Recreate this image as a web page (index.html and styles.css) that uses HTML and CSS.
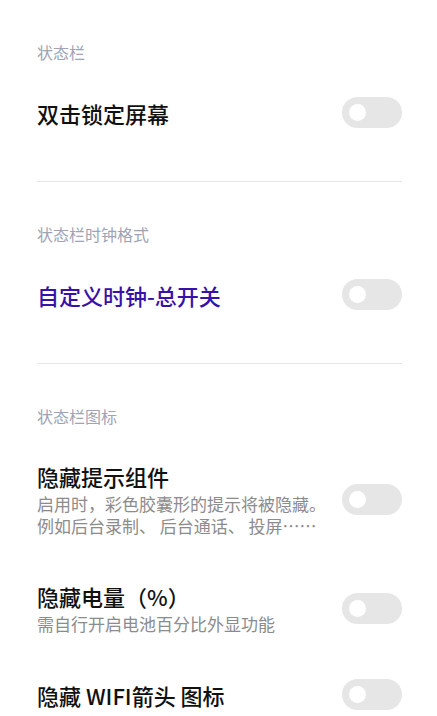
FILE: index.html
```html
<!DOCTYPE html>
<html lang="zh-CN">
<head>
<meta charset="UTF-8">
<meta name="viewport" content="width=device-width, initial-scale=1.0">
<title>状态栏</title>
<link rel="stylesheet" href="styles.css">
</head>
<body>
<div class="container">
  <div class="group">
    <div class="group-title">状态栏</div>
    <div class="row">
      <div class="text">
        <div class="title">双击锁定屏幕</div>
      </div>
      <span class="switch"></span>
    </div>
  </div>

  <div class="group">
    <div class="group-title">状态栏时钟格式</div>
    <div class="row">
      <div class="text">
        <div class="title accent">自定义时钟-总开关</div>
      </div>
      <span class="switch"></span>
    </div>
  </div>

  <div class="group last">
    <div class="group-title">状态栏图标</div>
    <div class="row">
      <div class="text">
        <div class="title">隐藏提示组件</div>
        <div class="summary">启用时，彩色胶囊形的提示将被隐藏。</div>
        <div class="summary">例如后台录制、 后台通话、 投屏……</div>
      </div>
      <span class="switch"></span>
    </div>
    <div class="row">
      <div class="text">
        <div class="title">隐藏电量（%）</div>
        <div class="summary">需自行开启电池百分比外显功能</div>
      </div>
      <span class="switch"></span>
    </div>
    <div class="row">
      <div class="text">
        <div class="title">隐藏 WIFI箭头 图标</div>
      </div>
      <span class="switch"></span>
    </div>
  </div>
</div>
</body>
</html>
```

FILE: styles.css
```css
body {
  margin: 0;
  background-color: #fff;
  font-family: "Noto Sans CJK SC", "Noto Sans", sans-serif;
  color: #111;
}
.container {
  padding: 0 35px 0 37px;
}
.group {
  border-bottom: 1px solid #e6e6e6;
  padding-bottom: 31px;
}
.group.last {
  border-bottom: none;
}
.group-title {
  padding-top: 41px;
  margin-bottom: 12px;
  font-size: 16px;
  line-height: 22px;
  color: #9ea3b5;
}
.row {
  display: flex;
  align-items: center;
  justify-content: space-between;
  padding: 22px 0;
}
.text {
  flex: 1;
  min-width: 0;
}
.title {
  font-size: 22px;
  line-height: 30px;
  font-weight: 500;
  color: #111;
}
.title.accent {
  color: #3612a6;
}
.summary {
  font-size: 17px;
  line-height: 22px;
  color: #8c8c8c;
  white-space: nowrap;
}
.title + .summary {
  margin-top: 2px;
}
.switch {
  position: relative;
  flex: none;
  width: 60px;
  height: 31px;
  border-radius: 16px;
  background-color: #e6e6e6;
}
.switch::after {
  content: "";
  position: absolute;
  left: 7px;
  top: 7px;
  width: 17px;
  height: 17px;
  border-radius: 50%;
  background-color: #fff;
}
```
